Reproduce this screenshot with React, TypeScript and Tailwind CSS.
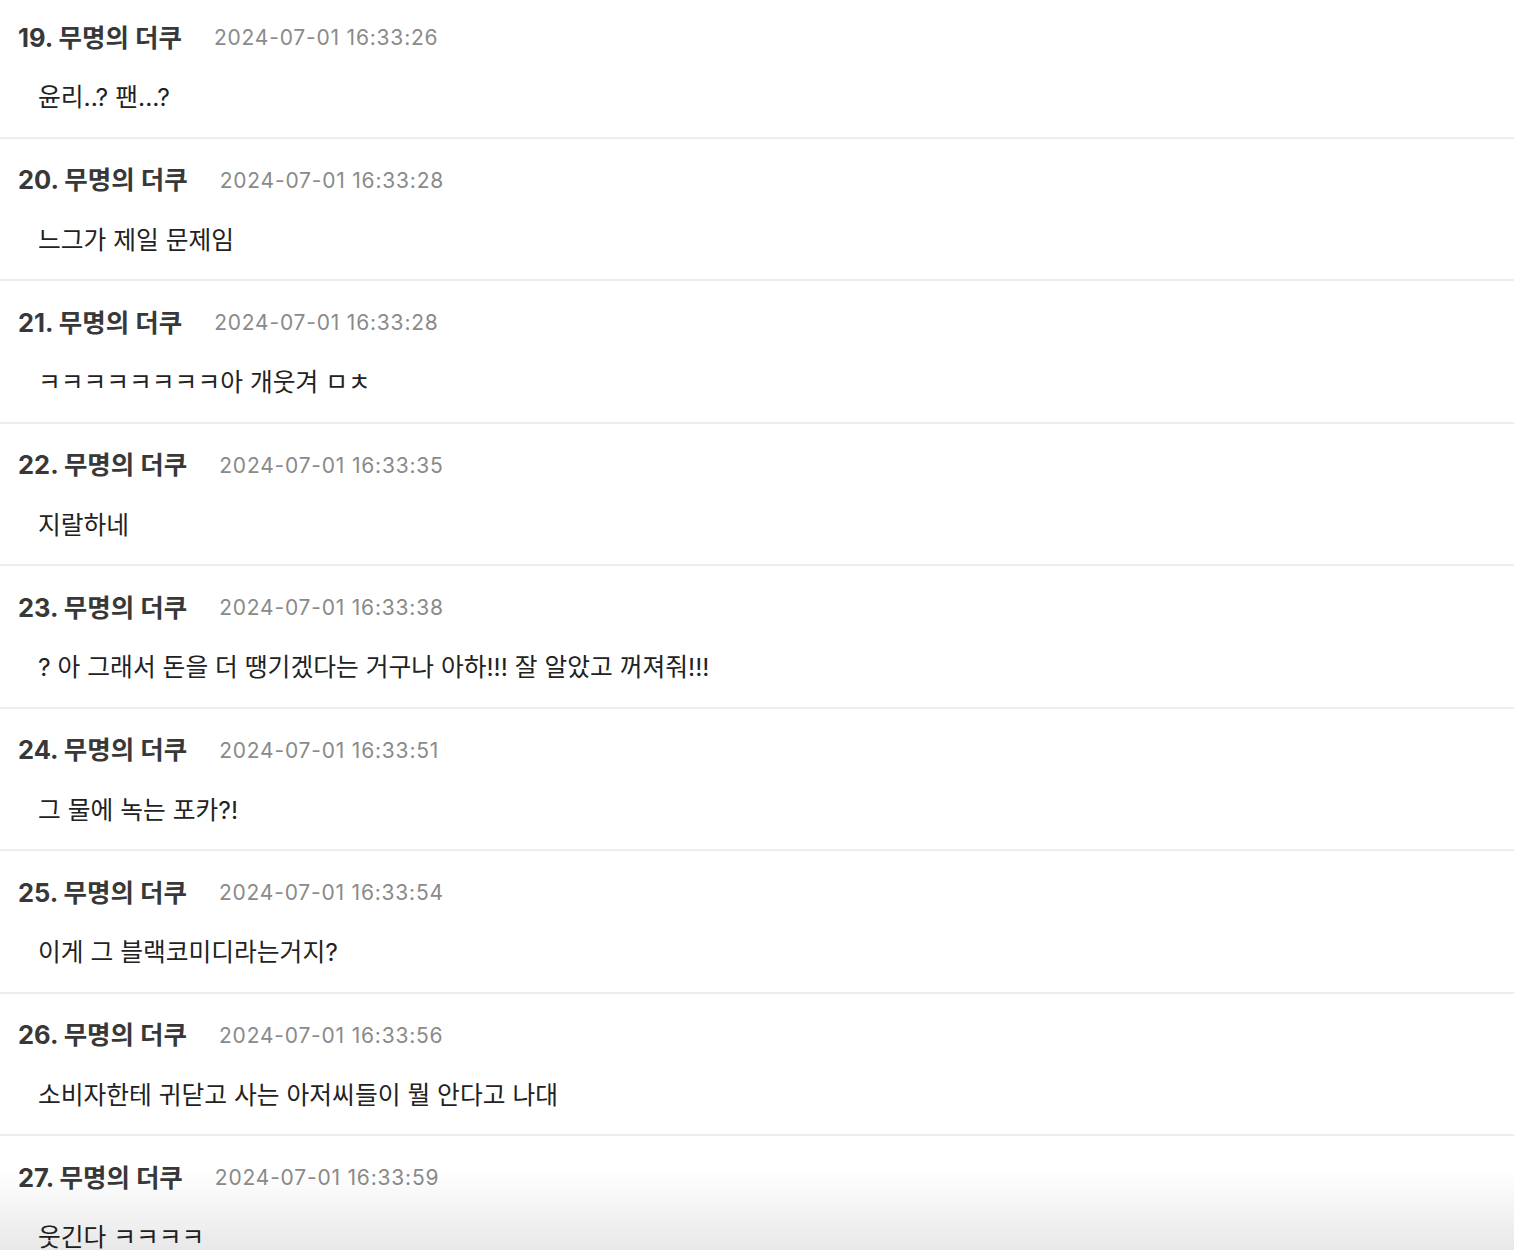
import React from 'react';

const comments = [
  { no: 19, time: '2024-07-01 16:33:26', text: '윤리..? 팬...?' },
  { no: 20, time: '2024-07-01 16:33:28', text: '느그가 제일 문제임' },
  { no: 21, time: '2024-07-01 16:33:28', text: 'ㅋㅋㅋㅋㅋㅋㅋㅋ아 개웃겨 ㅁㅊ' },
  { no: 22, time: '2024-07-01 16:33:35', text: '지랄하네' },
  { no: 23, time: '2024-07-01 16:33:38', text: '? 아 그래서 돈을 더 땡기겠다는 거구나 아하!!! 잘 알았고 꺼져줘!!!' },
  { no: 24, time: '2024-07-01 16:33:51', text: '그 물에 녹는 포카?!' },
  { no: 25, time: '2024-07-01 16:33:54', text: '이게 그 블랙코미디라는거지?' },
  { no: 26, time: '2024-07-01 16:33:56', text: '소비자한테 귀닫고 사는 아저씨들이 뭘 안다고 나대' },
  { no: 27, time: '2024-07-01 16:33:59', text: '웃긴다 ㅋㅋㅋㅋ' },
];

export default function App() {
  return (
    <div
      className="relative h-[1250px] overflow-hidden bg-white"
      style={{ fontFamily: 'Inter, "Noto Sans CJK KR", sans-serif' }}
    >
      <ul className="-mt-[4px]">
        {comments.map((c) => (
          <li key={c.no} className="border-b-2 border-[#ededed] pt-[22px] pb-[18.5px]">
            <div className="flex h-[40px] items-center pl-[18px]">
              <span className="text-[25.5px] font-bold text-[#383838]">{c.no}. 무명의 더쿠</span>
              <span className="ml-[32px] text-[21px] tracking-[0.8px] text-[#8a8a8a]">{c.time}</span>
            </div>
            <p className="mt-[20px] flex h-[40px] items-center pl-[38px] text-[24.75px] text-[#222222]">
              {c.text}
            </p>
          </li>
        ))}
      </ul>
      <div className="pointer-events-none absolute inset-x-0 bottom-0 h-[80px] bg-gradient-to-b from-black/0 to-black/[0.09]" />
    </div>
  );
}
